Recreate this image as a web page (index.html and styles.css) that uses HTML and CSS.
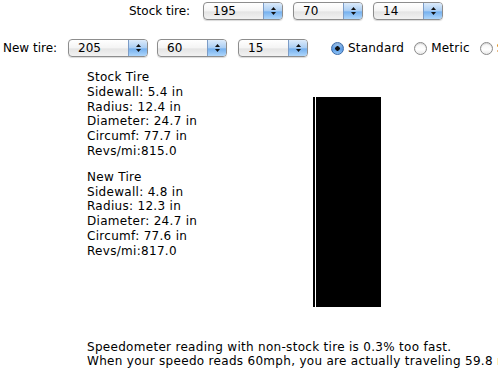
FILE: index.html
```html
<!DOCTYPE html>
<html lang="en">
<head>
    <meta charset="UTF-8">
    <title>Tire size calculator</title>
    <link rel="stylesheet" href="styles.css">
</head>
<body>
<div class="tire_form">
    <div class="tire_row stock_row">
        <span class="row_label">Stock tire:</span>
        <div class="popup wide"><span class="popup_value">195</span><span class="popup_arrows"><svg width="7" height="10" viewBox="0 0 7 10"><polygon points="3.5,1 6,4 1,4"/><polygon points="1,6 6,6 3.5,9"/></svg></span></div>
        <div class="popup"><span class="popup_value">70</span><span class="popup_arrows"><svg width="7" height="10" viewBox="0 0 7 10"><polygon points="3.5,1 6,4 1,4"/><polygon points="1,6 6,6 3.5,9"/></svg></span></div>
        <div class="popup"><span class="popup_value">14</span><span class="popup_arrows"><svg width="7" height="10" viewBox="0 0 7 10"><polygon points="3.5,1 6,4 1,4"/><polygon points="1,6 6,6 3.5,9"/></svg></span></div>
    </div>
    <div class="tire_row new_row">
        <span class="row_label">New tire:</span>
        <div class="popup wide"><span class="popup_value">205</span><span class="popup_arrows"><svg width="7" height="10" viewBox="0 0 7 10"><polygon points="3.5,1 6,4 1,4"/><polygon points="1,6 6,6 3.5,9"/></svg></span></div>
        <div class="popup"><span class="popup_value">60</span><span class="popup_arrows"><svg width="7" height="10" viewBox="0 0 7 10"><polygon points="3.5,1 6,4 1,4"/><polygon points="1,6 6,6 3.5,9"/></svg></span></div>
        <div class="popup"><span class="popup_value">15</span><span class="popup_arrows"><svg width="7" height="10" viewBox="0 0 7 10"><polygon points="3.5,1 6,4 1,4"/><polygon points="1,6 6,6 3.5,9"/></svg></span></div>
        <div class="units">
            <label class="unit"><span class="radio checked"></span>Standard</label>
            <label class="unit"><span class="radio"></span>Metric</label>
            <label class="unit"><span class="radio"></span>SI</label>
        </div>
    </div>
</div>

<div class="results">
    <div class="tire_info">
        <p>Stock Tire<br>Sidewall: 5.4 in<br>Radius: 12.4 in<br>Diameter: 24.7 in<br>Circumf: 77.7 in<br>Revs/mi:815.0</p>
        <p>New Tire<br>Sidewall: 4.8 in<br>Radius: 12.3 in<br>Diameter: 24.7 in<br>Circumf: 77.6 in<br>Revs/mi:817.0</p>
    </div>
    <div class="tire_bar">
        <div class="bar_new"></div>
        <div class="bar_stock"></div>
    </div>
</div>

<div class="speedo">
    Speedometer reading with non-stock tire is 0.3% too fast.<br>
    When your speedo reads 60mph, you are actually traveling 59.8 mph.
</div>
</body>
</html>
```

FILE: styles.css
```css
html, body {
    margin: 0;
    padding: 0;
    overflow: hidden;
    background: #fff;
}

body {
    font-family: "DejaVu Sans", "Liberation Sans", sans-serif;
    font-size: 12px;
    color: #000;
    white-space: nowrap;
}

.tire_row {
    display: flex;
    align-items: center;
    height: 18px;
}
.tire_row > * {
    flex-shrink: 0;
}

.stock_row {
    margin-top: 2px;
    padding-left: 129px;
}
.stock_row .row_label {
    width: 74px;
}
.stock_row .popup {
    margin-right: 10px;
}

.new_row {
    margin-top: 19px;
    padding-left: 3px;
}
.new_row .row_label {
    width: 65px;
}
.new_row .popup {
    margin-right: 11px;
}

.popup {
    display: flex;
    width: 70px;
    height: 18px;
    box-sizing: border-box;
    border: 1px solid #8d8d8d;
    border-radius: 4px;
    overflow: hidden;
    background: linear-gradient(#ffffff, #f4f4f4 50%, #e4e4e4 55%, #f2f2f2);
    box-shadow: 0 1px 1px rgba(0, 0, 0, 0.15);
}
.popup.wide {
    width: 80px;
}
.new_row .popup.wide {
    margin-right: 9px;
}
.popup_value {
    flex: 1;
    padding-left: 9px;
    line-height: 16px;
}
.popup_arrows {
    width: 18px;
    display: flex;
    align-items: center;
    justify-content: center;
    border-left: 1px solid #7c9cc6;
    background: linear-gradient(#dcebfb, #a9cdf3 50%, #75b0ee 55%, #aed6fb);
}
.popup_arrows svg {
    fill: #111;
}

.units {
    display: flex;
    align-items: center;
    margin-left: 12px;
}
.unit {
    display: flex;
    align-items: center;
    margin-right: 10px;
    letter-spacing: 0.2px;
}
.radio {
    width: 13px;
    height: 13px;
    box-sizing: border-box;
    border-radius: 50%;
    margin-right: 4px;
    border: 1px solid #8a8a8a;
    background: linear-gradient(#f6f6f6, #ffffff 60%, #e8e8e8);
    box-shadow: inset 0 1px 1px rgba(0, 0, 0, 0.15);
}
.radio.checked {
    border-color: #3c6ba8;
    background: radial-gradient(circle, #111 0, #111 2px, transparent 2.5px),
                linear-gradient(#a7cdf5, #5c9be4 55%, #8cc2f6);
}

.results {
    display: flex;
    align-items: flex-start;
    margin-top: 13px;
    padding-left: 87px;
    letter-spacing: 0.3px;
}
.tire_info {
    width: 226px;
    flex-shrink: 0;
}
.tire_info p {
    margin: 0 0 11px;
    line-height: 14.8px;
}

.tire_bar {
    display: flex;
    margin-top: 27px;
    height: 210px;
}
.bar_new {
    width: 2px;
    background: #000;
    margin-right: 1px;
}
.bar_stock {
    width: 65px;
    background: #000;
}

.speedo {
    margin-top: 33px;
    padding-left: 87px;
    line-height: 14px;
    letter-spacing: 0.3px;
}
```
